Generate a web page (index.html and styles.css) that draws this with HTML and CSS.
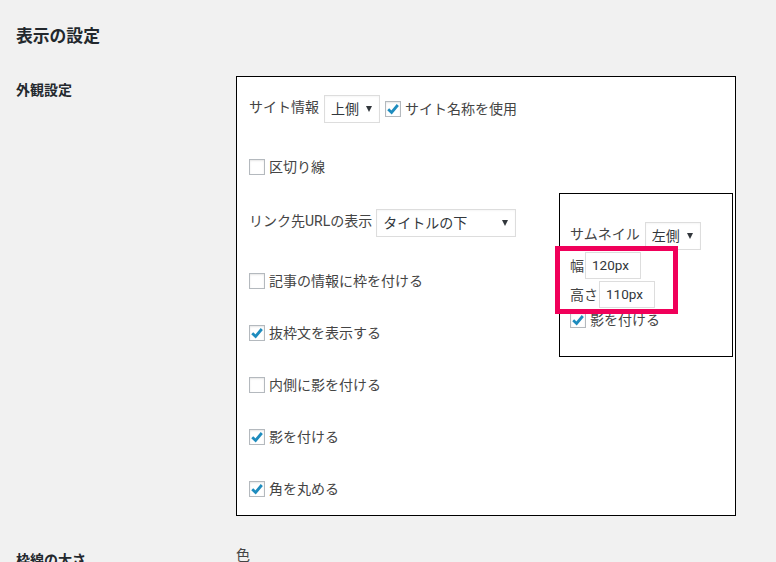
FILE: index.html
```html
<!DOCTYPE html>
<html lang="ja">
<head>
<meta charset="utf-8">
<title>表示の設定</title>
<link rel="stylesheet" href="styles.css">
</head>
<body>
<main class="page">
  <h2 class="title">表示の設定</h2>
  <section class="setting">
    <h3 class="setting-label">外観設定</h3>
    <div class="panel">
      <div class="row row-site">
        <span class="text">サイト情報</span>
        <span class="select select-pos">上側<i class="arrow"></i></span>
        <label class="check"><span class="box on"><svg viewBox="0 0 14 14"><path d="M2.2 7.2 L5.6 10.4 L11.8 3" /></svg></span>サイト名称を使用</label>
      </div>
      <div class="row row-line">
        <label class="check"><span class="box"></span>区切り線</label>
      </div>
      <div class="row row-link">
        <span class="text">リンク先URLの表示</span>
        <span class="select select-link">タイトルの下<i class="arrow"></i></span>
      </div>
      <div class="row row-meta">
        <label class="check"><span class="box"></span>記事の情報に枠を付ける</label>
      </div>
      <div class="row row-std">
        <label class="check"><span class="box on"><svg viewBox="0 0 14 14"><path d="M2.2 7.2 L5.6 10.4 L11.8 3" /></svg></span>抜枠文を表示する</label>
      </div>
      <div class="row row-std">
        <label class="check"><span class="box"></span>内側に影を付ける</label>
      </div>
      <div class="row row-std">
        <label class="check"><span class="box on"><svg viewBox="0 0 14 14"><path d="M2.2 7.2 L5.6 10.4 L11.8 3" /></svg></span>影を付ける</label>
      </div>
      <div class="row row-std">
        <label class="check"><span class="box on"><svg viewBox="0 0 14 14"><path d="M2.2 7.2 L5.6 10.4 L11.8 3" /></svg></span>角を丸める</label>
      </div>
      <div class="thumb">
        <div class="thumb-row thumb-first">
          <span class="text">サムネイル</span>
          <span class="select select-thumb">左側<i class="arrow"></i></span>
        </div>
        <div class="thumb-row thumb-size"><span class="text">幅</span><span class="field">120px</span></div>
        <div class="thumb-row thumb-size"><span class="text">高さ</span><span class="field">110px</span></div>
        <label class="check thumb-shadow"><span class="box on"><svg viewBox="0 0 14 14"><path d="M2.2 7.2 L5.6 10.4 L11.8 3" /></svg></span>影を付ける</label>
        <div class="highlight"></div>
      </div>
    </div>
  </section>
  <section class="setting setting-next">
    <h3 class="setting-label">枠線の太さ</h3>
    <div class="next-value">色</div>
  </section>
</main>
</body>
</html>
```
FILE: styles.css
```css
* { box-sizing: border-box; }
html, body { margin: 0; height: 100%; overflow: hidden; }
body {
  background: #f1f1f1;
  color: #444;
  font-family: Roboto, "Noto Sans CJK JP", sans-serif;
  font-size: 14px;
  line-height: 20px;
}
.page { padding: 24px 0 0 16px; height: 562px; overflow: hidden; }
.title { margin: 0 0 28px; font-size: 16.8px; line-height: 24px; font-weight: 700; color: #23282d; }
.setting { display: flex; align-items: flex-start; }
.setting-label { width: 220px; flex: none; margin: 0; padding-top: 4px; font-size: 14px; line-height: 20px; font-weight: 700; color: #23282d; }
.panel {
  position: relative;
  width: 500px;
  height: 440px;
  background: #fff;
  border: 1px solid #000;
  padding-left: 12px;
}
.row { display: flex; align-items: center; gap: 5px; }
.row-site { height: 28px; margin-top: 18px; }
.row-line { height: 28px; margin-top: 30px; }
.row-link { height: 28px; margin-top: 28px; gap: 4px; }
.row-meta { height: 28px; margin-top: 30px; }
.row-std { height: 28px; margin-top: 24px; }
.text { white-space: nowrap; }
.row-site .text, .row-link .text { position: relative; top: -2px; }
.thumb-first .text { position: relative; top: -2px; }
.select {
  display: flex;
  align-items: center;
  justify-content: space-between;
  height: 28px;
  background: #fff;
  border: 1px solid #ddd;
  padding: 0 6px;
  color: #32373c;
  box-shadow: inset 0 1px 2px rgba(0,0,0,.04);
  white-space: nowrap;
}
.select-pos { width: 56px; }
.select-link { width: 140px; }
.select-thumb { width: 56px; }
.arrow {
  width: 0; height: 0;
  border-left: 3px solid transparent;
  border-right: 3px solid transparent;
  border-top: 6px solid #32373c;
  margin-right: 1px;
}
.check { display: flex; align-items: center; gap: 4px; white-space: nowrap; }
.box {
  display: block;
  width: 16px; height: 16px;
  flex: none;
  background: #fff;
  border: 1px solid #b4b9be;
  box-shadow: inset 0 1px 2px rgba(0,0,0,.1);
}
.box svg { display: block; width: 14px; height: 14px; fill: none; stroke: #1e8cbe; stroke-width: 2.8; }
.thumb {
  position: absolute;
  left: 322px;
  top: 116px;
  width: 174px;
  height: 164px;
  background: #fff;
  border: 1px solid #000;
  padding: 28px 0 0 10px;
}
.thumb-row { display: flex; align-items: center; gap: 5px; }
.thumb-first { height: 28px; }
.thumb-size { height: 27px; gap: 1px; margin-top: 2px; }
.field {
  display: block;
  height: 27px;
  width: 56px;
  line-height: 25px;
  background: #fff;
  border: 1px solid #ddd;
  padding: 0 6px;
  color: #32373c;
  font-size: 13.5px;
}
.thumb-shadow { margin-top: 2px; }
.highlight {
  position: absolute;
  left: -5px;
  top: 52px;
  width: 123px;
  height: 68px;
  border: 5px solid #f0005a;
}
.setting-next { margin-top: 29px; }
.setting-next .setting-label { padding-top: 5px; }
```
